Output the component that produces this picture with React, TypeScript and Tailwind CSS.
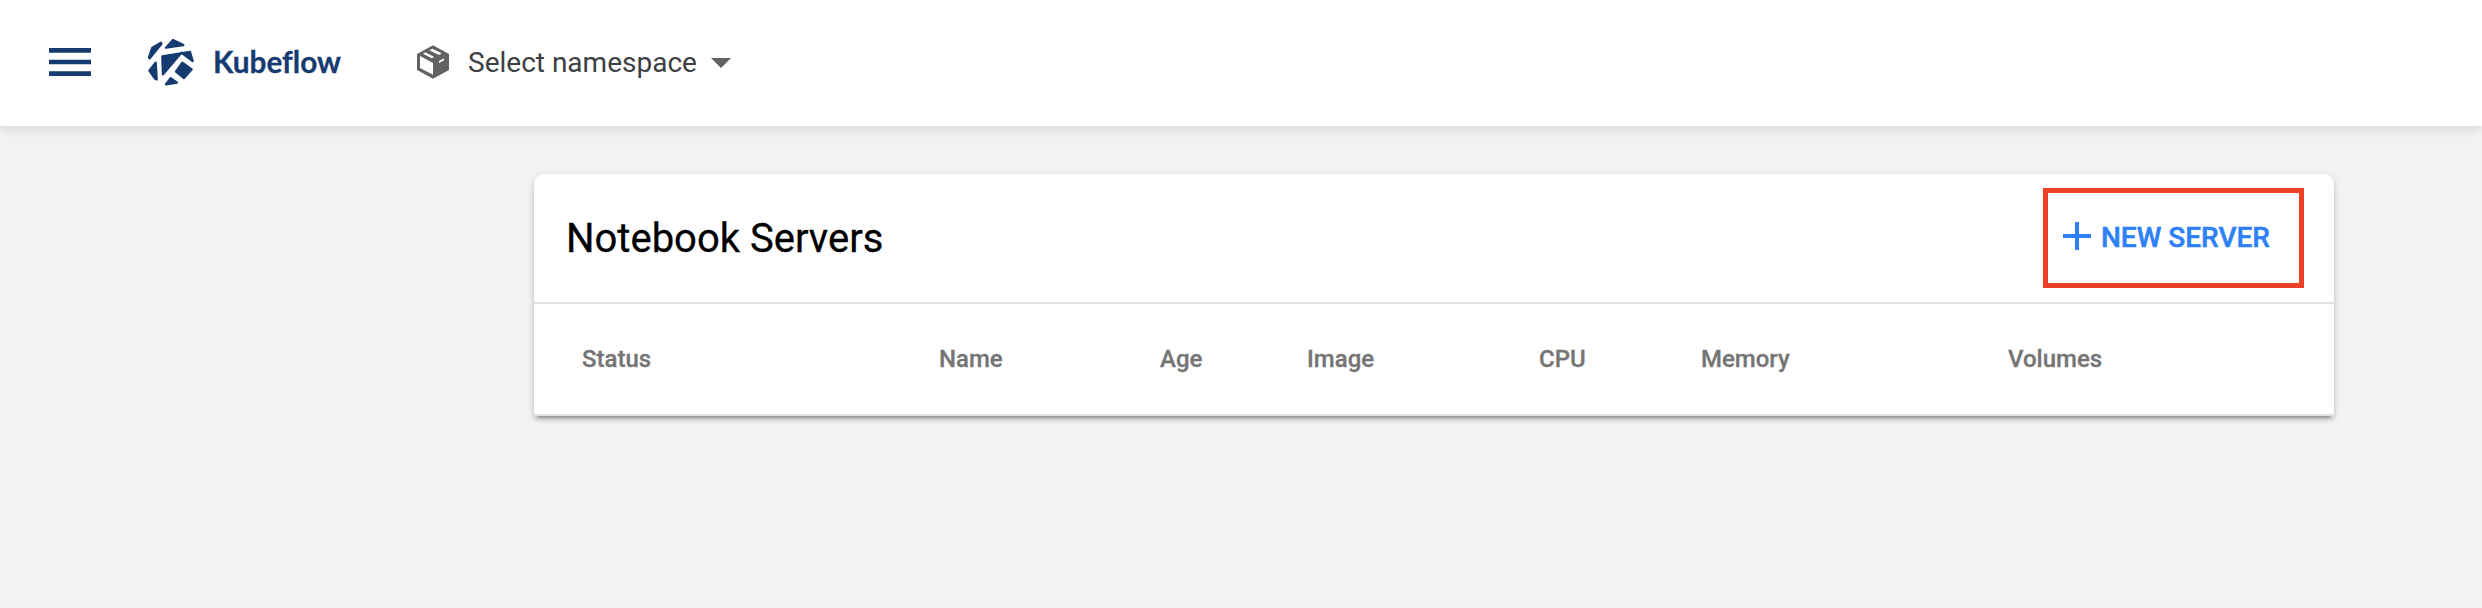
const columns = [
  { label: 'Status', width: 'w-[357px]' },
  { label: 'Name', width: 'w-[221px]' },
  { label: 'Age', width: 'w-[147px]' },
  { label: 'Image', width: 'w-[232px]' },
  { label: 'CPU', width: 'w-[162px]' },
  { label: 'Memory', width: 'w-[307px]' },
  { label: 'Volumes', width: 'w-[200px]' },
];

function MenuIcon() {
  return (
    <svg viewBox="0 0 24 24" className="size-14" fill="#163b70">
      <path d="M3 18h18v-2H3v2zm0-5h18v-2H3v2zm0-7v2h18V6H3z" />
    </svg>
  );
}

function KubeflowMark() {
  return (
    <svg viewBox="0 0 162 162" className="size-[54px]" fill="#163b70" stroke="#163b70" strokeWidth="7" strokeLinejoin="round">
      <path d="M25 38 L51 23 L52 27 L17 70 L15 67 Z" />
      <path d="M87 15 L118 30 L66 38 Z" />
      <path d="M55 64 L138 51 L146 78 L112 53 L57 118 Z" />
      <path d="M35 83 L38 133 L33 131 L16 107 Z" />
      <path d="M115 83 L143 103 L120 129 L96 110 Z" />
      <path d="M80 130 L99 143 L66 148 Z" />
    </svg>
  );
}

function PackageIcon() {
  return (
    <svg viewBox="0 0 120 120" className="size-10" fill="#606264">
      <path d="M57 10 L105 36 V84 L57 110 L9 84 V36 Z" />
      <path fill="#fff" d="M18 42 L57 63 V98 L18 78 Z" />
      <path fill="#fff" d="M27 35 L34 31 L61 45 L53 49 Z M46 25 L55 20 L83 34 L75 39 Z" />
      <path fill="#fff" d="M75 57 L90 49 V55 L75 63 Z" />
    </svg>
  );
}

export default function App() {
  return (
    <div className="min-h-[608px] bg-[#f1f3f5] font-['Roboto',sans-serif]">
      <header className="relative flex h-[126px] items-center bg-white pl-[42px] pb-[2px] shadow-[0_4px_8px_rgba(0,0,0,0.07),0_6px_20px_rgba(0,0,0,0.04)]">
        <MenuIcon />
        <div className="ml-[46px] flex items-center">
          <KubeflowMark />
          <span className="ml-[15px] w-[126px] whitespace-nowrap font-['Lato',sans-serif] text-[29.8px] leading-10 font-bold text-[#163b70] [font-variant-ligatures:none] [-webkit-text-stroke:0.3px_#163b70]">Kubeflow</span>
        </div>
        <button className="ml-[75px] flex items-center">
          <PackageIcon />
          <span className="ml-[14px] w-[229px] pt-[2px] text-left text-[28px] leading-10 whitespace-nowrap text-[#3c4043]">Select namespace</span>
          <svg viewBox="0 0 20 10" className="mt-[2px] ml-[14px] h-[10px] w-5" fill="#5f6163">
            <path d="M0 0h20L10 10z" />
          </svg>
        </button>
      </header>
      <main className="pl-[534px] pt-12">
        <section className="h-[242px] w-[1800px] rounded-t-[10px] bg-white shadow-[0_6px_2px_-4px_rgba(0,0,0,0.2),0_4px_4px_0_rgba(0,0,0,0.14),0_2px_10px_0_rgba(0,0,0,0.12)]">
          <div className="flex h-[130px] items-center justify-between border-b-2 border-[#e0e0e0] pr-[30px] pl-8">
            <h1 className="pt-[2px] text-[40px] leading-[48px] text-black [-webkit-text-stroke:0.3px_#000]">Notebook Servers</h1>
            <button className="flex h-[100px] w-[261px] items-center border-[5px] border-[#ee4023] pb-[4px] pl-[15px] text-[#2d80f6]">
              <svg viewBox="0 0 28 28" className="size-7" fill="currentColor">
                <path d="M12 0h4v12h12v4H16v12h-4V16H0v-4h12z" />
              </svg>
              <span className="ml-[10px] pt-[3px] text-[28px] leading-10 font-medium whitespace-nowrap [-webkit-text-stroke:0.5px_#2d80f6]">NEW SERVER</span>
            </button>
          </div>
          <div className="flex h-28 items-center border-b-2 border-[#e0e0e0] pl-12 text-2xl font-medium text-[#757575] [-webkit-text-stroke:0.3px_#757575]">
            {columns.map((column) => (
              <span key={column.label} className={column.width}>{column.label}</span>
            ))}
          </div>
        </section>
      </main>
    </div>
  );
}
